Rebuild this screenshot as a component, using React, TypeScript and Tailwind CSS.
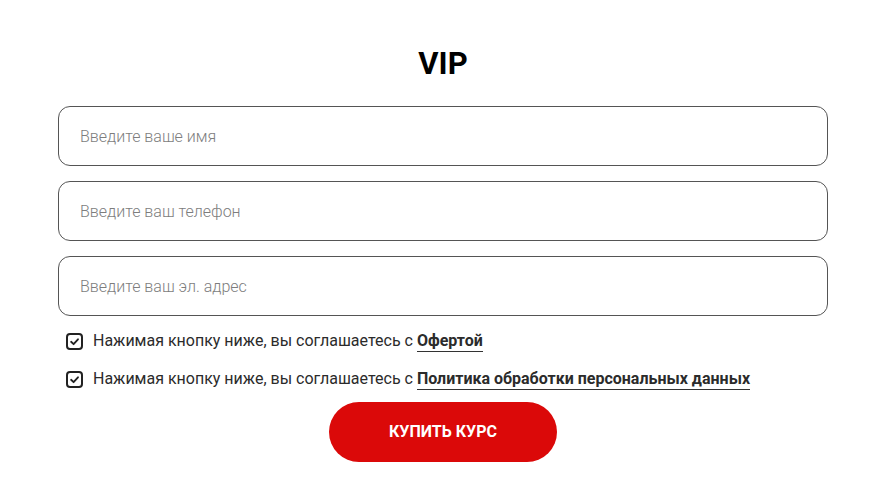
import React from 'react';

const CheckIcon = () => (
  <span className="flex h-[17px] w-[17px] shrink-0 items-center justify-center rounded-[4px] border-2 border-[#222]">
    <svg width="11" height="11" viewBox="0 0 12 12" fill="none">
      <path d="M2.3 6.3 L5 8.9 L9.8 3.6" stroke="#222" strokeWidth="2" strokeLinecap="round" strokeLinejoin="round" />
    </svg>
  </span>
);

const Field = ({ placeholder }: { placeholder: string }) => (
  <input
    type="text"
    placeholder={placeholder}
    className="h-[60px] w-full rounded-[12px] border border-[#555] bg-white px-[21px] text-[16px] font-light text-[#333] outline-none placeholder:text-[#7d7d7d]"
  />
);

const Agree = ({ link }: { link: string }) => (
  <label className="flex h-[24px] items-center gap-[10px] pl-[8px] text-[16px] leading-[24px] text-[#2b2b2b]">
    <CheckIcon />
    <span>
      Нажимая кнопку ниже, вы соглашаетесь с{' '}
      <a href="#" className="border-b border-[#333] pb-[1px] font-bold text-[#2b2b2b]">
        {link}
      </a>
    </span>
  </label>
);

export default function App() {
  return (
    <div className="min-h-screen bg-white pl-[58px] pt-[45px]" style={{ fontFamily: 'Roboto, "Noto Sans", sans-serif' }}>
      <form className="flex w-[770px] flex-col">
        <h2 className="mb-[23px] text-center text-[31px] font-bold leading-[38px] text-black">VIP</h2>
        <div className="flex flex-col gap-[15px]">
          <Field placeholder="Введите ваше имя" />
          <Field placeholder="Введите ваш телефон" />
          <Field placeholder="Введите ваш эл. адрес" />
        </div>
        <div className="mt-[13px] flex flex-col gap-[14px]">
          <Agree link="Офертой" />
          <Agree link="Политика обработки персональных данных" />
        </div>
        <button
          type="button"
          className="mx-auto mt-[11px] h-[60px] w-[228px] rounded-full bg-[#db0909] text-[16px] font-bold uppercase text-white"
        >
          Купить курс
        </button>
      </form>
    </div>
  );
}
